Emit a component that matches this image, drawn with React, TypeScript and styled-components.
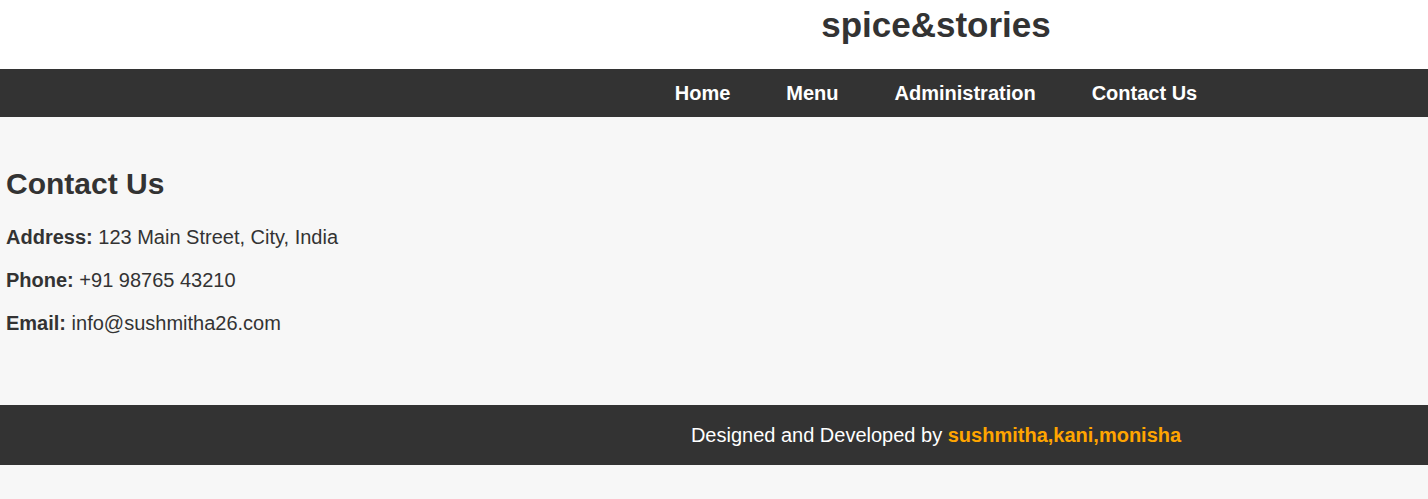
import React from "react";
import styled, { createGlobalStyle } from "styled-components";

const Global = createGlobalStyle`
  html, body { margin: 0; padding: 0; }
  body {
    background: #f7f7f7;
    font-family: "Liberation Sans", Arial, sans-serif;
    color: #333;
  }
`;

const Header = styled.header`
  background: #fff;
  height: 69px;
  box-sizing: border-box;
  padding: 5px 0 0 444px;
  text-align: center;
`;

const Title = styled.h1`
  margin: 0;
  font-size: 35px;
  font-weight: bold;
  line-height: 40px;
  color: #333;
`;

const Nav = styled.nav`
  background: #333;
  height: 48px;
  box-sizing: border-box;
  padding-left: 444px;
  display: flex;
  justify-content: center;
  align-items: center;
  gap: 56px;
`;

const NavLink = styled.a`
  color: #fff;
  font-size: 20px;
  font-weight: bold;
  text-decoration: none;
  line-height: 23px;
`;

const Main = styled.main`
  padding: 50px 6px 70px;
`;

const Heading = styled.h2`
  margin: 0 0 25px;
  font-size: 30px;
  line-height: 34px;
  font-weight: bold;
`;

const Info = styled.p`
  margin: 0 0 20px;
  font-size: 20px;
  line-height: 23px;
  &:last-child { margin-bottom: 0; }
`;

const Footer = styled.footer`
  background: #333;
  height: 60px;
  box-sizing: border-box;
  padding: 19px 0 0 444px;
  text-align: center;
  color: #fff;
  font-size: 20px;
  line-height: 23px;
`;

const Names = styled.strong`
  color: #ffa500;
`;

export default function App() {
  return (
    <>
      <Global />
      <Header>
        <Title>spice&amp;stories</Title>
      </Header>
      <Nav>
        <NavLink href="#">Home</NavLink>
        <NavLink href="#">Menu</NavLink>
        <NavLink href="#">Administration</NavLink>
        <NavLink href="#">Contact Us</NavLink>
      </Nav>
      <Main>
        <Heading>Contact Us</Heading>
        <Info><strong>Address:</strong> 123 Main Street, City, India</Info>
        <Info><strong>Phone:</strong> +91 98765 43210</Info>
        <Info><strong>Email:</strong> info@sushmitha26.com</Info>
      </Main>
      <Footer>
        Designed and Developed by <Names>sushmitha,kani,monisha</Names>
      </Footer>
    </>
  );
}
